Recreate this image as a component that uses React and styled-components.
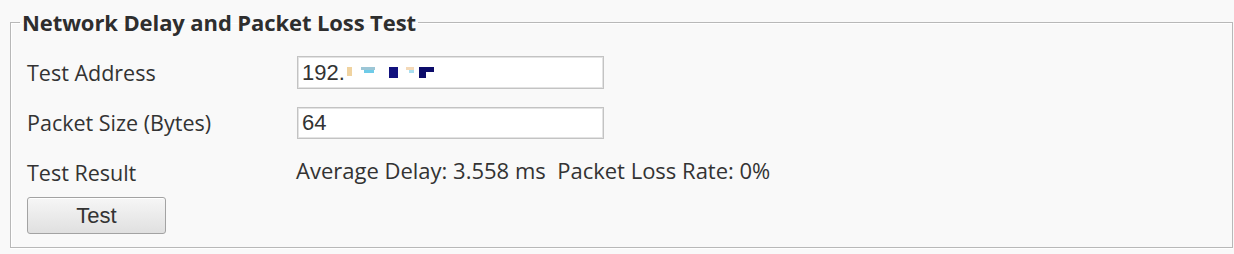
import React from "react";
import styled, { createGlobalStyle } from "styled-components";

const Global = createGlobalStyle`
  html, body { margin: 0; padding: 0; background: #f9f9f9; }
  body { width: 1234px; height: 254px; overflow: hidden; font-family: "Open Sans", Lato, sans-serif; color: #333; }
`;

const Fieldset = styled.fieldset`
  box-sizing: border-box;
  margin: 11px 0 0 10px;
  width: 1223px;
  height: 237px;
  border: 1px solid #b8b8b8;
  box-shadow: inset 1px 1px 0 #fff, 0 1px 0 #fff;
  padding: 23px 16px 12px 16px;
  min-width: 0;
`;

const Legend = styled.legend`
  margin-left: -7px;
  padding: 0 2px;
  font-family: "Open Sans", sans-serif;
  font-weight: 700;
  font-size: 22px;
  line-height: 22px;
  letter-spacing: -0.1px;
  color: #2e2e2e;
`;

const Form = styled.div`
  display: grid;
  grid-template-columns: 270px 307px;
  row-gap: 17px;
  align-items: center;
`;

const Label = styled.div`
  font-size: 21.5px;
  line-height: 33px;
  color: #333;
`;

const Input = styled.div`
  box-sizing: border-box;
  height: ${(p) => p.$h || 33}px;
  border: 1px solid #c3c3c3;
  box-shadow: inset 0 0 0 1px #e3e3e3;
  background: #fff;
  display: flex;
  align-items: center;
  padding-left: 4px;
  font-family: "Liberation Sans", Arial, sans-serif;
  font-size: 22px;
  color: #333;
`;

const Result = styled.div`
  font-size: 22px;
  line-height: 33px;
  color: #333;
  white-space: pre;
  margin-left: -1px;
  margin-top: -4px;
`;

const Button = styled.button`
  margin-top: 8px;
  width: 139px;
  height: 37px;
  border: 1px solid #a3a3a3;
  border-radius: 3px;
  background: linear-gradient(#f6f6f6, #e0e0e0);
  box-shadow: inset 0 1px 0 #fff;
  font-family: "Liberation Sans", Arial, sans-serif;
  font-size: 22px;
  color: #333;
  padding: 0;
  cursor: pointer;
`;

const Mosaic = () => (
  <svg width="92" height="14" viewBox="0 0 92 14">
    <rect x="2" y="1" width="5" height="9" fill="#f0d3a0" />
    <rect x="16" y="1" width="14" height="3" fill="#9cc6d6" />
    <rect x="19" y="4" width="10" height="3" fill="#6fcbe8" />
    <rect x="44" y="1" width="9" height="11" fill="#12127e" />
    <rect x="61" y="1" width="8" height="3" fill="#f4d9b8" />
    <rect x="64" y="4" width="5" height="3" fill="#a9dff0" />
    <rect x="74" y="1" width="15" height="5" fill="#0c0c6a" />
    <rect x="74" y="6" width="7" height="6" fill="#0c0c6a" />
  </svg>
);

export default function App() {
  return (
    <>
      <Global />
      <Fieldset>
        <Legend>Network Delay and Packet Loss Test</Legend>
        <Form>
          <Label>Test Address</Label>
          <Input>
            192.
            <Mosaic />
          </Input>
          <Label>Packet Size (Bytes)</Label>
          <Input $h={32}>64</Input>
          <Label>Test Result</Label>
          <Result>Average Delay: 3.558 ms  Packet Loss Rate: 0%</Result>
        </Form>
        <Button>Test</Button>
      </Fieldset>
    </>
  );
}
